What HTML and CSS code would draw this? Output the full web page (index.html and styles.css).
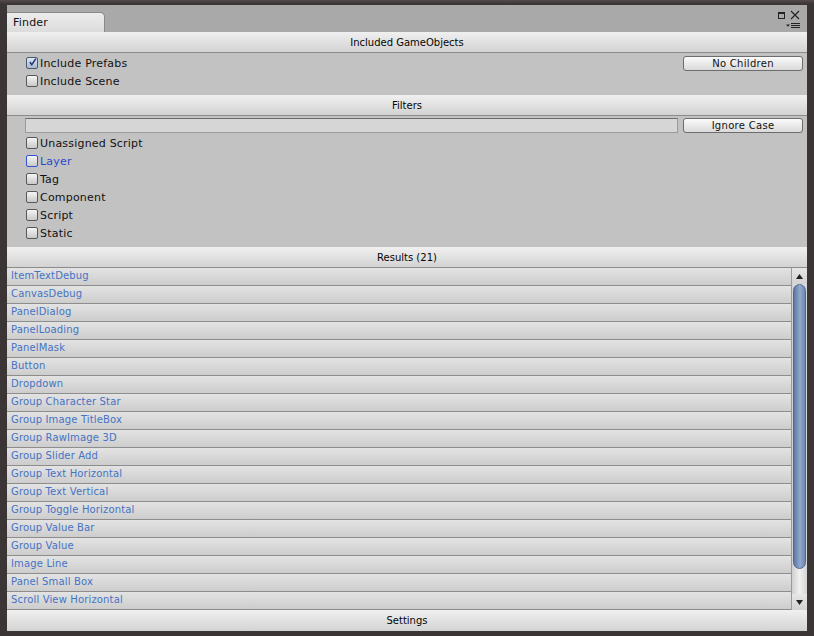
FILE: index.html
```html
<!DOCTYPE html>
<html lang="en">
<head>
    <meta charset="UTF-8">
    <title>Finder</title>
    <link rel="stylesheet" href="styles.css">
</head>
<body>
    <div class="window">
        <div class="tabbar">
            <div class="tab">Finder</div>
            <div class="win-icons">
                <div class="icon-top">
                    <svg width="7" height="7" viewBox="0 0 7 7"><rect x="0.5" y="0.5" width="6" height="6" fill="none" stroke="#222" stroke-width="1"/><rect x="0" y="0" width="7" height="2" fill="#222"/></svg>
                    <svg width="10" height="10" viewBox="0 0 10 10"><path d="M1 1 L9 9 M9 1 L1 9" stroke="#222" stroke-width="1.1" fill="none"/></svg>
                </div>
                <svg class="icon-menu" width="14" height="6" viewBox="0 0 14 6"><path d="M0 1.5 H4 L2 3.8 Z" fill="#222"/><path d="M5 0.5 H14 M5 2.5 H14 M5 4.5 H14" stroke="#222" stroke-width="1"/></svg>
            </div>
        </div>

        <div class="content">
            <div class="header">Included GameObjects</div>
            <div class="section">
                <div class="row">
                    <span class="check checked">
                        <svg width="12" height="12" viewBox="0 0 12 12"><path d="M2.5 6 L5 9.5 L10.5 1.5" stroke="#1f3572" stroke-width="2" fill="none"/></svg>
                    </span>
                    <span class="label">Include Prefabs</span>
                    <button class="btn">No Children</button>
                </div>
                <div class="row">
                    <span class="check"></span>
                    <span class="label">Include Scene</span>
                </div>
            </div>

            <div class="header">Filters</div>
            <div class="section">
                <div class="field-row">
                    <div class="field"></div>
                    <button class="btn">Ignore Case</button>
                </div>
                <div class="row"><span class="check"></span><span class="label">Unassigned Script</span></div>
                <div class="row focus"><span class="check"></span><span class="label">Layer</span></div>
                <div class="row"><span class="check"></span><span class="label">Tag</span></div>
                <div class="row"><span class="check"></span><span class="label">Component</span></div>
                <div class="row"><span class="check"></span><span class="label">Script</span></div>
                <div class="row"><span class="check"></span><span class="label">Static</span></div>
            </div>

            <div class="header">Results (21)</div>
            <div class="results">
                <ul class="list">
                    <li>ItemTextDebug</li>
                    <li>CanvasDebug</li>
                    <li>PanelDialog</li>
                    <li>PanelLoading</li>
                    <li>PanelMask</li>
                    <li>Button</li>
                    <li>Dropdown</li>
                    <li>Group Character Star</li>
                    <li>Group Image TitleBox</li>
                    <li>Group RawImage 3D</li>
                    <li>Group Slider Add</li>
                    <li>Group Text Horizontal</li>
                    <li>Group Text Vertical</li>
                    <li>Group Toggle Horizontal</li>
                    <li>Group Value Bar</li>
                    <li>Group Value</li>
                    <li>Image Line</li>
                    <li>Panel Small Box</li>
                    <li>Scroll View Horizontal</li>
                </ul>
                <div class="scrollbar">
                    <div class="arrow">
                        <svg width="7" height="5" viewBox="0 0 7 5"><path d="M0 5 L3.5 0 L7 5 Z" fill="#222"/></svg>
                    </div>
                    <div class="track">
                        <div class="thumb"></div>
                    </div>
                    <div class="arrow">
                        <svg width="7" height="5" viewBox="0 0 7 5"><path d="M0 0 L3.5 5 L7 0 Z" fill="#222"/></svg>
                    </div>
                </div>
            </div>

            <div class="header footer">Settings</div>
        </div>
    </div>
</body>
</html>
```

FILE: styles.css
```css
body {
    margin: 0;
    background-color: #3b3535;
    font-family: "DejaVu Sans", Verdana, sans-serif;
}

.window {
    width: 814px;
    height: 636px;
    box-sizing: border-box;
    padding: 5px 7px 5px 7px;
    background: linear-gradient(#544c4c, #3b3535 4px);
    display: flex;
    flex-direction: column;
}

/* 탭 영역 */
.tabbar {
    height: 27px;
    flex-shrink: 0;
    background-color: #a9a9a9;
    display: flex;
    align-items: flex-end;
    justify-content: space-between;
}

.tab {
    width: 98px;
    height: 20px;
    box-sizing: border-box;
    padding-left: 6px;
    line-height: 19px;
    font-size: 11px;
    letter-spacing: 0.2px;
    color: #111;
    background: linear-gradient(#ececec, #dcdcdc);
    border-top: 1px solid #8a8a8a;
    border-right: 1px solid #8a8a8a;
    border-radius: 0 5px 0 0;
}

.win-icons {
    align-self: flex-start;
    width: 26px;
    margin-top: 5px;
    margin-right: 7px;
    display: flex;
    flex-direction: column;
    align-items: flex-end;
}

.icon-top {
    display: flex;
    align-items: center;
    gap: 5px;
}

.icon-menu {
    margin-top: 3px;
}

/* 본문 */
.content {
    flex: 1;
    min-height: 0;
    background-color: #c2c2c2;
    display: flex;
    flex-direction: column;
}

.header {
    height: 20px;
    flex-shrink: 0;
    line-height: 21px;
    text-align: center;
    font-size: 10px;
    color: #050505;
    background: linear-gradient(#f0f0f0, #d3d3d3);
    border-bottom: 1px solid #8c8c8c;
}

.header.footer {
    line-height: 22px;
    border-bottom: none;
    height: 21px;
}

.section {
    padding: 1px 4px 5px 18px;
}

.row {
    height: 18px;
    display: flex;
    align-items: center;
}

.check {
    width: 12px;
    height: 12px;
    margin-left: 1px;
    margin-right: 2px;
    flex-shrink: 0;
    box-sizing: border-box;
    border: 1px solid #595959;
    border-radius: 2px;
    background: linear-gradient(#f6f6f6, #c9c9c9);
    display: flex;
    align-items: center;
    justify-content: center;
}

.check svg {
    margin-top: -3px;
    margin-left: 1px;
}

.check.checked {
    background: linear-gradient(#dfe6f1, #a9b8d0);
    border-color: #4c5a70;
}

.label {
    font-size: 11px;
    letter-spacing: 0.2px;
    color: #111;
    flex: 1;
}

.row.focus .check {
    border-color: #3553d6;
}

.row.focus .label {
    color: #2c49cf;
}

.btn {
    width: 120px;
    height: 15px;
    padding: 0;
    font-family: "DejaVu Sans", Verdana, sans-serif;
    font-size: 10px;
    letter-spacing: 0.3px;
    line-height: 13px;
    color: #111;
    border: 1px solid #6d6d6d;
    border-radius: 3px;
    background: linear-gradient(#fafafa, #dadada);
    flex-shrink: 0;
}

.field-row {
    height: 16px;
    display: flex;
    align-items: center;
    margin-bottom: 1px;
}

.field {
    flex: 1;
    height: 15px;
    margin-right: 5px;
    box-sizing: border-box;
    border: 1px solid #9a9a9a;
    border-top-color: #6e6e6e;
    background-color: #d6d6d6;
}

/* 결과 목록 */
.results {
    flex: 1;
    min-height: 0;
    display: flex;
}

.list {
    flex: 1;
    margin: 0;
    padding: 0;
    list-style: none;
    overflow: hidden;
}

.list li {
    height: 17px;
    line-height: 16px;
    padding-left: 4px;
    font-size: 10px;
    letter-spacing: 0.15px;
    color: #4673c4;
    background: linear-gradient(#e3e3e3, #cdcdcd);
    border-bottom: 1px solid #8d8d8d;
}

.scrollbar {
    width: 15px;
    flex-shrink: 0;
    display: flex;
    flex-direction: column;
    background-color: #d0d0d0;
    border-left: 1px solid #9a9a9a;
}

.arrow {
    height: 16px;
    flex-shrink: 0;
    display: flex;
    align-items: center;
    justify-content: center;
    background: linear-gradient(#e6e6e6, #d2d2d2);
}

.track {
    flex: 1;
    background: linear-gradient(90deg, #cfcfcf, #f0f0f0 50%, #d4d4d4);
}

.thumb {
    height: 285px;
    margin: 0 1px;
    box-sizing: border-box;
    border: 1px solid #4f6894;
    border-radius: 7px;
    background: linear-gradient(90deg, #5d78a6, #93a9cc 55%, #6c86b2);
}
```
